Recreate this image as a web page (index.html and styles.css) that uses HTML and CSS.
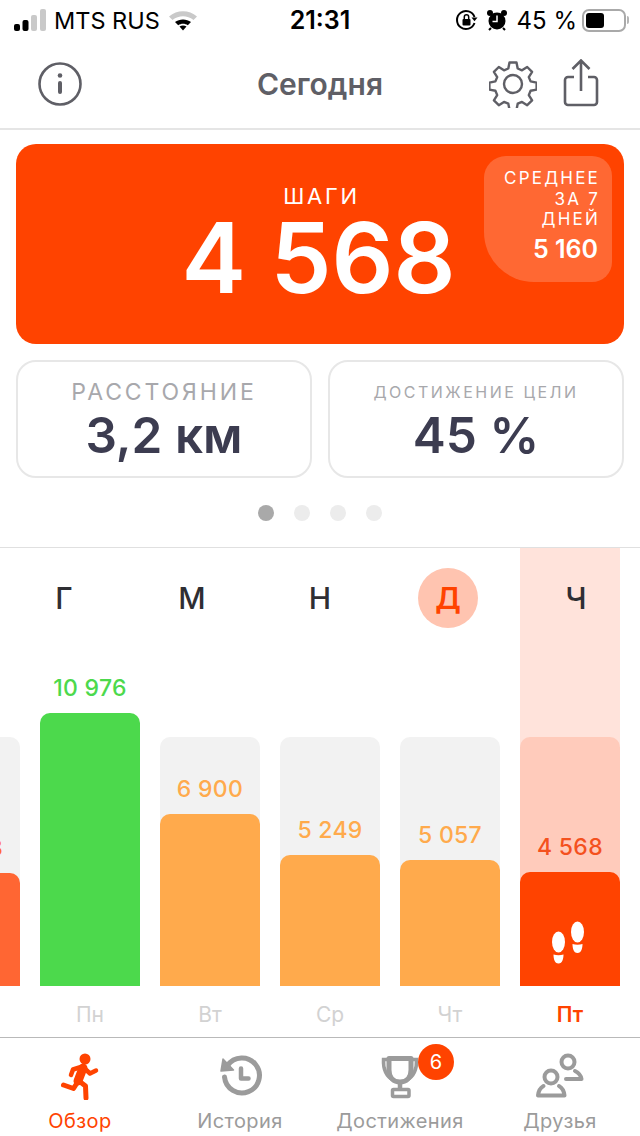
FILE: index.html
```html
<!DOCTYPE html>
<html lang="ru">
<head>
<meta charset="utf-8">
<title>Сегодня</title>
<link rel="stylesheet" href="styles.css">
</head>
<body>
<div class="app">
  <div class="status">
    <div class="status-left">
      <svg class="signal" viewBox="0 0 32 22" width="32" height="22"><rect x="0" y="15" width="6" height="7" rx="2" fill="#000"/><rect x="8.500" y="11" width="6" height="11" rx="2" fill="#000"/><rect x="17" y="6" width="6" height="16" rx="2" fill="#c9c9c9"/><rect x="26" y="0" width="6" height="22" rx="2" fill="#c9c9c9"/></svg>
      <span class="carrier">MTS RUS</span>
      <svg class="wifi" viewBox="0 0 30 22" width="30" height="22"><path d="M1 7.500C9 0.500 21 0.500 29 7.500L25.500 11C19 6 11 6 4.500 11Z" fill="#c9c9c9"/><path d="M7 13C11.500 9.500 18.500 9.500 23 13L19.800 16.200C17 14.200 13 14.200 10.200 16.200Z" fill="#000"/><path d="M11.500 17.500C13.500 16.200 16.500 16.200 18.500 17.500L15 21.500Z" fill="#000"/></svg>
    </div>
    <div class="clock">21:31</div>
    <div class="status-right">
      <svg viewBox="0 0 22 22" width="22" height="22"><path d="M18.500 14A9 9 0 1 1 18.500 8" fill="none" stroke="#000" stroke-width="2"/><path d="M15.500 8.500h6l-3 3.800z" fill="#000"/><rect x="6.500" y="10" width="8" height="6.500" rx="1" fill="#000"/><path d="M8.300 10V8a2.200 2.200 0 0 1 4.400 0v2" fill="none" stroke="#000" stroke-width="1.500"/></svg>
      <svg viewBox="0 0 22 22" width="22" height="22"><circle cx="11" cy="12" r="8.500" fill="#000"/><circle cx="4" cy="4" r="3" fill="#000"/><circle cx="18" cy="4" r="3" fill="#000"/><path d="M11 6.500V12.500H6.500" fill="none" stroke="#fff" stroke-width="1.500"/><path d="M5 19l-2 2M17 19l2 2" stroke="#000" stroke-width="2"/></svg>
      <span class="battery-text">45 %</span>
      <div class="battery"><div class="battery-fill"></div></div>
      <div class="battery-nub"></div>
    </div>
  </div>

  <header class="nav">
    <svg class="nav-info" viewBox="0 0 46 46" width="46" height="46"><circle cx="23" cy="23" r="20.500" fill="none" stroke="#5f5f66" stroke-width="2.600"/><circle cx="23" cy="14.500" r="2.300" fill="#5f5f66"/><rect x="21" y="20" width="4" height="13" rx="2" fill="#5f5f66"/></svg>
    <h1 class="nav-title">Сегодня</h1>
    <svg class="nav-gear" viewBox="0 0 48 48" width="48" height="48"><path d="M20.500 2.500h7l1.200 6 4.300 1.800 5.200-3.300 4.900 4.900-3.300 5.200 1.800 4.300 6 1.200v7l-6 1.200-1.800 4.300 3.300 5.200-4.900 4.900-5.200-3.300-4.300 1.800-1.200 6h-7l-1.200-6-4.300-1.800-5.200 3.300-4.900-4.900 3.300-5.200-1.800-4.300-6-1.200v-7l6-1.200 1.800-4.300-3.300-5.200 4.900-4.900 5.200 3.300 4.300-1.800z" fill="none" stroke="#5f5f66" stroke-width="2.400" stroke-linejoin="round"/><circle cx="24" cy="24" r="9" fill="none" stroke="#5f5f66" stroke-width="2.400"/></svg>
    <svg class="nav-share" viewBox="0 0 36 48" width="36" height="48"><path d="M11 18H5a3 3 0 0 0-3 3v22a3 3 0 0 0 3 3h26a3 3 0 0 0 3-3V21a3 3 0 0 0-3-3h-6" fill="none" stroke="#5f5f66" stroke-width="2.600"/><path d="M18 32V2M9.500 10L18 1.500L26.500 10" fill="none" stroke="#5f5f66" stroke-width="2.600"/></svg>
  </header>

  <section class="hero">
    <div class="hero-label">ШАГИ</div>
    <div class="hero-value">4 568</div>
    <div class="avg">
      <div class="avg-label">СРЕДНЕЕ<br>ЗА 7<br>ДНЕЙ</div>
      <div class="avg-value">5 160</div>
    </div>
  </section>

  <section class="stats">
    <div class="stat">
      <div class="stat-label">РАССТОЯНИЕ</div>
      <div class="stat-value">3,2 км</div>
    </div>
    <div class="stat">
      <div class="stat-label stat-label-small">ДОСТИЖЕНИЕ ЦЕЛИ</div>
      <div class="stat-value">45 %</div>
    </div>
  </section>

  <div class="dots"><span class="dot dot-active"></span><span class="dot"></span><span class="dot"></span><span class="dot"></span></div>

  <section class="chart">
    <div class="letters">
      <span class="letter">Г</span>
      <span class="letter">М</span>
      <span class="letter">Н</span>
      <span class="letter letter-today">Д</span>
      <span class="letter">Ч</span>
    </div>
    <div class="bars">
      <div class="col col-prev">
        <div class="track"></div>
        <div class="stack"><span class="num num-prev">4 568</span><div class="bar bar-prev" style="height:113px"></div></div>
        <div class="day"></div>
      </div>
      <div class="col">
        <div class="track"></div>
        <div class="stack"><span class="num num-green">10 976</span><div class="bar bar-green" style="height:273px"></div></div>
        <div class="day">Пн</div>
      </div>
      <div class="col">
        <div class="track"></div>
        <div class="stack"><span class="num num-orange">6 900</span><div class="bar bar-orange" style="height:172px"></div></div>
        <div class="day">Вт</div>
      </div>
      <div class="col">
        <div class="track"></div>
        <div class="stack"><span class="num num-orange">5 249</span><div class="bar bar-orange" style="height:131px"></div></div>
        <div class="day">Ср</div>
      </div>
      <div class="col">
        <div class="track"></div>
        <div class="stack"><span class="num num-orange">5 057</span><div class="bar bar-orange" style="height:126px"></div></div>
        <div class="day">Чт</div>
      </div>
      <div class="col col-today">
        <div class="track"></div>
        <div class="stack"><span class="num num-today">4 568</span>
          <div class="bar bar-today" style="height:114px">
            <svg class="feet" viewBox="0 0 36 44" width="36" height="44"><ellipse cx="6.500" cy="21" rx="6.500" ry="10.500" fill="#fff"/><path d="M1.500 33.500c3 1 7 1 10 0 0 4-1 9-5 9s-5-5-5-9z" fill="#fff"/><ellipse cx="25.500" cy="11" rx="6.500" ry="10.500" fill="#fff"/><path d="M20.500 23c3 1 7 1 10 0 0 4-1 9-5 9s-5-5-5-9z" fill="#fff"/></svg>
          </div>
        </div>
        <div class="day day-today">Пт</div>
      </div>
    </div>
  </section>

  <nav class="tabs">
    <div class="tab tab-active">
      <svg viewBox="0 0 50 50" width="50" height="50"><circle cx="30" cy="9" r="5.500" fill="#ff4300"/><path d="M28 18L23 31" stroke="#ff4300" stroke-width="9" stroke-linecap="round" fill="none"/><path d="M28 17L35 23.500L41 20.500" stroke="#ff4300" stroke-width="4.500" stroke-linecap="round" stroke-linejoin="round" fill="none"/><path d="M26 17L18 19.500L16 25" stroke="#ff4300" stroke-width="4.500" stroke-linecap="round" stroke-linejoin="round" fill="none"/><path d="M24 31L30.500 36L31 48" stroke="#ff4300" stroke-width="5" stroke-linecap="round" stroke-linejoin="round" fill="none"/><path d="M22 33L18.500 38.500L8.500 35" stroke="#ff4300" stroke-width="5" stroke-linecap="round" stroke-linejoin="round" fill="none"/></svg>
      <span class="tab-label">Обзор</span>
    </div>
    <div class="tab">
      <svg viewBox="0 0 50 50" width="50" height="50"><path d="M12.500 15.500A17.500 17.500 0 1 1 9.500 27" fill="none" stroke="#9b9b9b" stroke-width="5" stroke-linecap="round"/><path d="M8 9L6 21L18.500 20Z" fill="#9b9b9b" stroke="#9b9b9b" stroke-width="1.500" stroke-linejoin="round"/><path d="M26 18.500V28.500H33.500" fill="none" stroke="#9b9b9b" stroke-width="4.500" stroke-linecap="round" stroke-linejoin="round"/></svg>
      <span class="tab-label">История</span>
    </div>
    <div class="tab">
      <svg viewBox="0 0 50 50" width="50" height="50"><path d="M14 8.500H36V20C36 28 31 32 25 32S14 28 14 20Z" fill="none" stroke="#9b9b9b" stroke-width="5" stroke-linejoin="round"/><path d="M14 9.500H8.500C8 20 11 26 18 30M36 9.500H41.500C42 20 39 26 32 30" fill="none" stroke="#9b9b9b" stroke-width="3.500" stroke-linecap="round"/><path d="M25 32V40" stroke="#9b9b9b" stroke-width="4.500"/><rect x="17.500" y="39.500" width="16.500" height="7" rx="1" fill="none" stroke="#9b9b9b" stroke-width="3.500"/></svg>
      <span class="tab-label">Достижения</span>
      <span class="badge">6</span>
    </div>
    <div class="tab">
      <svg viewBox="0 0 50 50" width="50" height="50"><circle cx="33" cy="12" r="6.500" fill="none" stroke="#9b9b9b" stroke-width="4"/><path d="M40 21C44 23 46 26 46.500 29H31" fill="none" stroke="#9b9b9b" stroke-width="4" stroke-linecap="round" stroke-linejoin="round"/><circle cx="16" cy="27" r="6.500" fill="none" stroke="#9b9b9b" stroke-width="4"/><path d="M8.500 36C5 38 3.500 41 3 45.500H29.500C29 41 27.500 38 24 36" fill="none" stroke="#9b9b9b" stroke-width="4" stroke-linecap="round" stroke-linejoin="round"/></svg>
      <span class="tab-label">Друзья</span>
    </div>
  </nav>
</div>
</body>
</html>
```
FILE: styles.css
```css
* { box-sizing: border-box; }
html, body { margin: 0; padding: 0; background: #fff; }
body { font-family: Inter, "Noto Sans", sans-serif; }
.app { width: 640px; height: 1136px; overflow: hidden; display: flex; flex-direction: column; }

.status { height: 40px; display: flex; align-items: center; justify-content: space-between; padding: 0 11px 0 14px; font-family: Inter, sans-serif; color: #000; position: relative; }
.status-left { display: flex; align-items: center; gap: 8px; }
.carrier { font-size: 23.500px; letter-spacing: 0; margin: 0 1px 0 0; }
.wifi { margin-left: -1px; }
.clock { font-size: 25px; font-weight: 600; position: absolute; left: 0; right: 0; text-align: center; }
.status-right { display: flex; align-items: center; gap: 9px; position: relative; }
.status-right svg:first-child { margin-right: -1px; }
.battery-text { font-size: 24px; margin-right: -4px; }
.battery { width: 44px; height: 23px; border: 2px solid #a9a9a9; border-radius: 7px; padding: 2px; }
.battery-fill { width: 18px; height: 100%; background: #000; border-radius: 3px; }
.battery-nub { width: 2px; height: 8px; background: #b5b5b5; margin-left: -8px; border-radius: 0 2px 2px 0; }

.nav { height: 90px; border-bottom: 2px solid #e5e5e5; display: flex; align-items: center; position: relative; padding: 0 0 0 37px; }
.nav-title { position: absolute; left: 0; right: 0; text-align: center; margin: 0; font-size: 30px; font-weight: 600; color: #5f5f66; }
.nav-gear { margin-left: 406px; }
.nav-share { margin-left: 26px; margin-top: -2px; }

.hero { margin: 14px 16px 0; height: 200px; background: #ff4300; border-radius: 20px; position: relative; display: flex; flex-direction: column; align-items: center; color: #fff; padding: 38px 0 0 0; }
.hero-label { font-size: 22px; letter-spacing: 2.800px; line-height: 28px; margin-right: -3px; }
.hero-value { font-size: 97px; font-weight: 600; line-height: 92px; margin: 2px 3px 0 0; white-space: nowrap; }
.avg { position: absolute; top: 12px; right: 12px; width: 128px; height: 126px; background: rgba(255,255,255,0.2); border-radius: 22px 20px 20px 50px; text-align: right; padding: 12px 14px 0 0; }
.avg-label { font-size: 17px; line-height: 20.500px; letter-spacing: 2.200px; margin-right: -2px; }
.avg-value { font-size: 25px; font-weight: 600; margin-top: 5px; line-height: 28px; }

.stats { display: flex; gap: 16px; margin: 16px 16px 0; }
.stat { flex: 1; height: 118px; border: 2px solid #e7e7e7; border-radius: 20px; text-align: center; padding-top: 16px; }
.stat-label { font-size: 23px; line-height: 28px; letter-spacing: 2.900px; color: #a8a8ac; }
.stat-label-small { font-size: 16px; letter-spacing: 2.500px; }
.stat-value { font-size: 49.500px; font-weight: 600; line-height: 58px; color: #3c3c50; margin-top: 0; }

.dots { display: flex; justify-content: flex-start; align-items: center; gap: 20px; margin: 27px 0 0 258px; height: 16px; }
.dot { width: 16px; height: 16px; border-radius: 50%; background: #ececec; }
.dot-active { background: #a9a9a9; }

.chart { margin-top: 26px; border-top: 1px solid #e0e0e0; position: relative; flex: 1; overflow: hidden; }
.letters { position: absolute; top: 20px; left: 0; right: 0; display: grid; grid-template-columns: repeat(5, 128px); justify-items: center; align-items: center; height: 60px; z-index: 2; }
.letter { width: 60px; height: 60px; display: flex; align-items: center; justify-content: center; font-size: 30px; font-weight: 500; color: #2e2e33; border-radius: 50%; }
.letter-today { background: #ffc4b0; color: #ff4300; font-weight: 600; }

.bars { display: flex; gap: 20px; margin-left: -80px; }
.col { width: 100px; flex: none; display: grid; grid-template-rows: 438px 51px; }
.col-today { background: linear-gradient(#ffe3db, #ffe3db) top / 100% 198px no-repeat; }
.track { grid-area: 1 / 1; align-self: end; height: 249px; background: #f2f2f2; border-radius: 10px 10px 0 0; }
.col-today .track { background: #ffcbbb; }
.stack { grid-area: 1 / 1; align-self: end; display: flex; flex-direction: column; align-items: center; }
.num { font-size: 23px; font-weight: 500; line-height: 26px; margin-bottom: 12px; letter-spacing: 0.300px; white-space: nowrap; }
.num-green { color: #4cd94c; }
.num-orange { color: #ffaa4c; }
.num-today { color: #f4511e; }
.num-prev { color: #ff6a33; }
.bar { width: 100%; border-radius: 10px 10px 0 0; }
.bar-green { background: #4cd94c; }
.bar-orange { background: #ffaa4c; }
.bar-prev { background: #ff6633; }
.bar-today { background: #ff4300; display: flex; align-items: flex-start; justify-content: center; padding-top: 49px; }
.day { grid-area: 2 / 1; text-align: center; font-size: 21px; line-height: 24px; padding-top: 17px; color: #d2d2d2; }
.day-today { color: #ff4300; font-weight: 600; }

.tabs { height: 99px; border-top: 1px solid #b9b9b9; display: grid; grid-template-columns: repeat(4, 160px); flex: none; }
.tab { display: flex; flex-direction: column; align-items: center; position: relative; padding-top: 12px; }
.tab-label { font-size: 20px; line-height: 24px; color: #9b9b9b; margin-top: 9px; letter-spacing: 0.400px; white-space: nowrap; }
.tab-active .tab-label { color: #ff4300; }
.badge { position: absolute; top: 6px; left: 98px; width: 36px; height: 36px; border-radius: 50%; background: #ff4300; color: #fff; font-size: 20px; display: flex; align-items: center; justify-content: center; }
```
